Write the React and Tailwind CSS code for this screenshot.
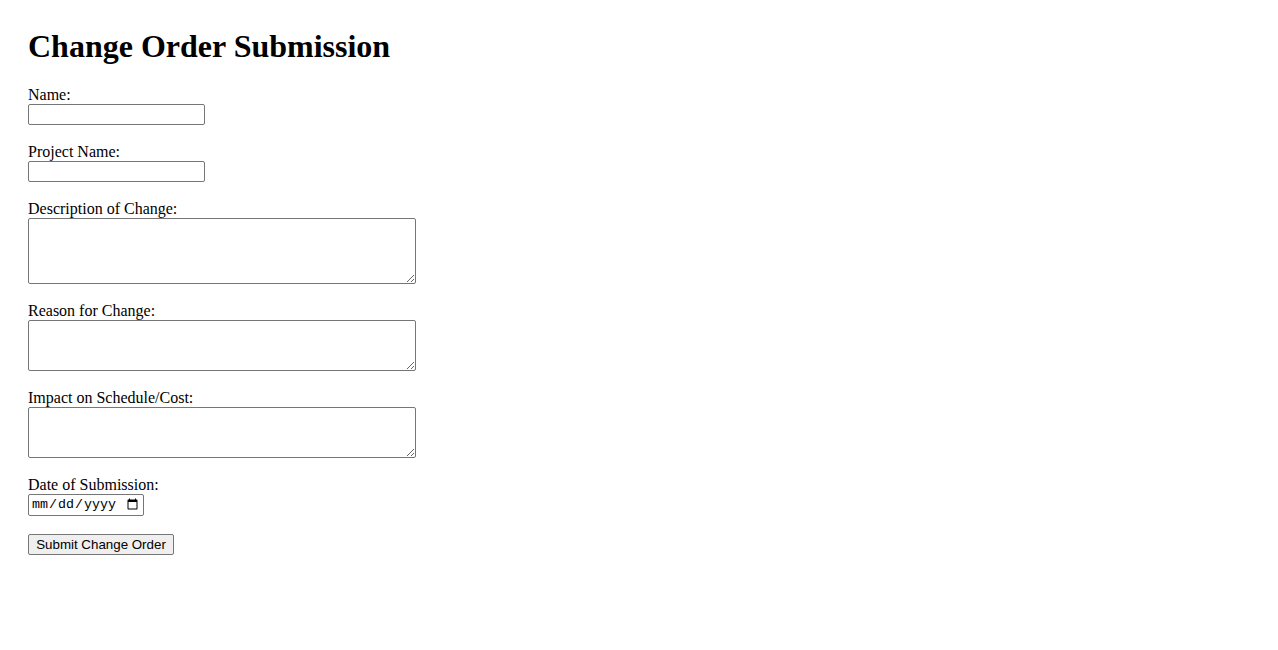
import { useState } from "react";

const fieldClass =
  "block border border-[#767676] rounded-[2px] bg-white text-[13.33px] text-black outline-none";

function Field({ label, children }) {
  return (
    <div className="mb-[18px]">
      <label className="block leading-[18px]">{label}</label>
      {children}
    </div>
  );
}

export default function App() {
  const [form, setForm] = useState({
    name: "",
    project: "",
    description: "",
    reason: "",
    impact: "",
    date: "",
  });

  const update = (key) => (e) => setForm({ ...form, [key]: e.target.value });

  return (
    <div className="min-h-[650px] bg-white pt-[28px] pl-[28px] font-['Liberation_Serif','Times_New_Roman',serif] text-[16px] text-black">
      <h1 className="text-[32px] font-bold leading-[36.8px] mb-[21px]">
        Change Order Submission
      </h1>
      <form onSubmit={(e) => e.preventDefault()}>
        <Field label="Name:">
          <input
            type="text"
            value={form.name}
            onChange={update("name")}
            className={`${fieldClass} w-[177px] h-[21px] px-[2px] font-['Liberation_Sans',Arial,sans-serif]`}
          />
        </Field>
        <Field label="Project Name:">
          <input
            type="text"
            value={form.project}
            onChange={update("project")}
            className={`${fieldClass} w-[177px] h-[21px] px-[2px] font-['Liberation_Sans',Arial,sans-serif]`}
          />
        </Field>
        <Field label="Description of Change:">
          <textarea
            value={form.description}
            onChange={update("description")}
            className={`${fieldClass} w-[388px] h-[66px] p-[2px] resize font-['Liberation_Mono',monospace]`}
          />
        </Field>
        <Field label="Reason for Change:">
          <textarea
            value={form.reason}
            onChange={update("reason")}
            className={`${fieldClass} w-[388px] h-[51px] p-[2px] resize font-['Liberation_Mono',monospace]`}
          />
        </Field>
        <Field label="Impact on Schedule/Cost:">
          <textarea
            value={form.impact}
            onChange={update("impact")}
            className={`${fieldClass} w-[388px] h-[51px] p-[2px] resize font-['Liberation_Mono',monospace]`}
          />
        </Field>
        <Field label="Date of Submission:">
          <input
            type="date"
            value={form.date}
            onChange={update("date")}
            className={`${fieldClass} w-[116px] h-[22px] px-[2px] font-['Liberation_Mono',monospace]`}
          />
        </Field>
        <button
          type="submit"
          className="block w-[146px] h-[21px] border border-[#767676] rounded-[2px] bg-[#efefef] px-[6px] text-[13.33px] leading-[15px] text-black font-['Liberation_Sans',Arial,sans-serif]"
        >
          Submit Change Order
        </button>
      </form>
    </div>
  );
}
